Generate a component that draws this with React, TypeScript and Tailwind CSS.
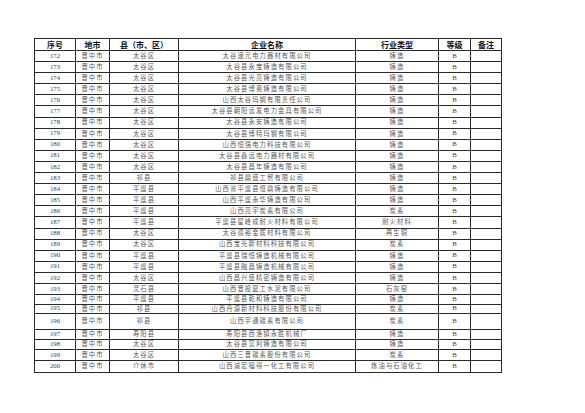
import React from 'react';

interface Row {
  no: number;
  county: string;
  company: string;
  industry: string;
  h: string;
}

const rows: Row[] = [
  { no: 172, county: '太谷区', company: '太谷速元电力器材有限公司', industry: '铸造', h: 'h-[11.1px]' },
  { no: 173, county: '太谷区', company: '太谷县永宝铸造有限公司', industry: '铸造', h: 'h-[11.1px]' },
  { no: 174, county: '太谷区', company: '太谷县光亮铸造有限公司', industry: '铸造', h: 'h-[11.1px]' },
  { no: 175, county: '太谷区', company: '太谷县博奥铸造有限公司', industry: '铸造', h: 'h-[11.1px]' },
  { no: 176, county: '太谷区', company: '山西太谷玛钢有限责任公司', industry: '铸造', h: 'h-[11.1px]' },
  { no: 177, county: '太谷区', company: '太谷县朝阳远发电力金具有限公司', industry: '铸造', h: 'h-[11.1px]' },
  { no: 178, county: '太谷区', company: '太谷县永安铸造有限公司', industry: '铸造', h: 'h-[11.1px]' },
  { no: 179, county: '太谷区', company: '太谷县博特玛钢有限公司', industry: '铸造', h: 'h-[11.1px]' },
  { no: 180, county: '太谷区', company: '山西恒强电力科技有限公司', industry: '铸造', h: 'h-[11.1px]' },
  { no: 181, county: '太谷区', company: '太谷县鑫远电力器材有限公司', industry: '铸造', h: 'h-[11.1px]' },
  { no: 182, county: '太谷区', company: '太谷县昌年铸造有限公司', industry: '铸造', h: 'h-[11.1px]' },
  { no: 183, county: '祁县', company: '祁县鼎盛工贸有限公司', industry: '铸造', h: 'h-[11.1px]' },
  { no: 184, county: '平遥县', company: '山西省平遥县恒鼎铸造有限公司', industry: '铸造', h: 'h-[11.1px]' },
  { no: 185, county: '平遥县', company: '山西平遥永华铸造有限公司', industry: '铸造', h: 'h-[11.1px]' },
  { no: 186, county: '平遥县', company: '山西亮宇炭素有限公司', industry: '炭素', h: 'h-[11.1px]' },
  { no: 187, county: '平遥县', company: '平遥县星峰成耐火材料有限公司', industry: '耐火材料', h: 'h-[11.1px]' },
  { no: 188, county: '太谷区', company: '太谷德裕金属材料有限公司', industry: '再生铜', h: 'h-[11.1px]' },
  { no: 189, county: '太谷区', company: '山西宝光新材料科技有限公司', industry: '炭素', h: 'h-[11.1px]' },
  { no: 190, county: '平遥县', company: '平遥县瑞恒铸造机械有限公司', industry: '铸造', h: 'h-[11.1px]' },
  { no: 191, county: '平遥县', company: '平遥县融昌铸造机械有限公司', industry: '铸造', h: 'h-[11.1px]' },
  { no: 192, county: '太谷区', company: '山西昌兴盛精密铸造有限公司', industry: '铸造', h: 'h-[11.1px]' },
  { no: 193, county: '灵石县', company: '山西晋投夏工水泥有限公司', industry: '石灰窑', h: 'h-[11.1px]' },
  { no: 194, county: '平遥县', company: '平遥县乾和铸造有限公司', industry: '铸造', h: 'h-[10px]' },
  { no: 195, county: '祁县', company: '山西丹源新材料科技股份有限公司', industry: '炭素', h: 'h-[8.5px]' },
  { no: 196, county: '祁县', company: '山西宇通碳素有限公司', industry: '炭素', h: 'h-[16.3px]' },
  { no: 197, county: '寿阳县', company: '寿阳县西洛镇永胜机械厂', industry: '铸造', h: 'h-[10px]' },
  { no: 198, county: '太谷区', company: '太谷县富利铸造有限公司', industry: '铸造', h: 'h-[10.3px]' },
  { no: 199, county: '太谷区', company: '山西三晋碳素股份有限公司', industry: '炭素', h: 'h-[10.7px]' },
  { no: 200, county: '介休市', company: '山西诚宏福得一化工有限公司', industry: '炼油与石油化工', h: 'h-[12px]' },
];

const cell =
  'flex items-center justify-center overflow-hidden whitespace-nowrap border-l border-t border-[#2a2a2a] leading-none';
const cjk = "font-['Noto_Sans_CJK_SC',sans-serif] text-[6.3px] tracking-[1.1px] text-[#5a5a5a]";
const num = "font-['Liberation_Serif',serif] text-[6.8px] text-[#444]";
const grid = 'grid grid-cols-[41px_34px_69px_177px_83px_32px_31px]';

const App = () => {
  return (
    <div className="min-h-[413px] w-[585px] bg-white pl-[34px] pt-[38px]">
      <div className="w-[468px] border-b border-r border-[#2a2a2a]">
        {/* Header */}
        <div className={`${grid} h-[12px] font-['Noto_Sans_CJK_SC',sans-serif] text-[8px] font-bold text-[#111]`}>
          <div className={cell}>序号</div>
          <div className={cell}>地市</div>
          <div className={cell}>县（市、区）</div>
          <div className={cell}>企业名称</div>
          <div className={cell}>行业类型</div>
          <div className={cell}>等级</div>
          <div className={cell}>备注</div>
        </div>

        {/* Rows */}
        {rows.map((row) => (
          <div key={row.no} className={`${grid} ${row.h}`}>
            <div className={`${cell} ${num}`}>{row.no}</div>
            <div className={`${cell} ${cjk}`}>晋中市</div>
            <div className={`${cell} ${cjk}`}>{row.county}</div>
            <div className={`${cell} ${cjk}`}>{row.company}</div>
            <div className={`${cell} ${cjk}`}>{row.industry}</div>
            <div className={`${cell} ${num}`}>B</div>
            <div className={cell}></div>
          </div>
        ))}
      </div>
    </div>
  );
};

export default App;
